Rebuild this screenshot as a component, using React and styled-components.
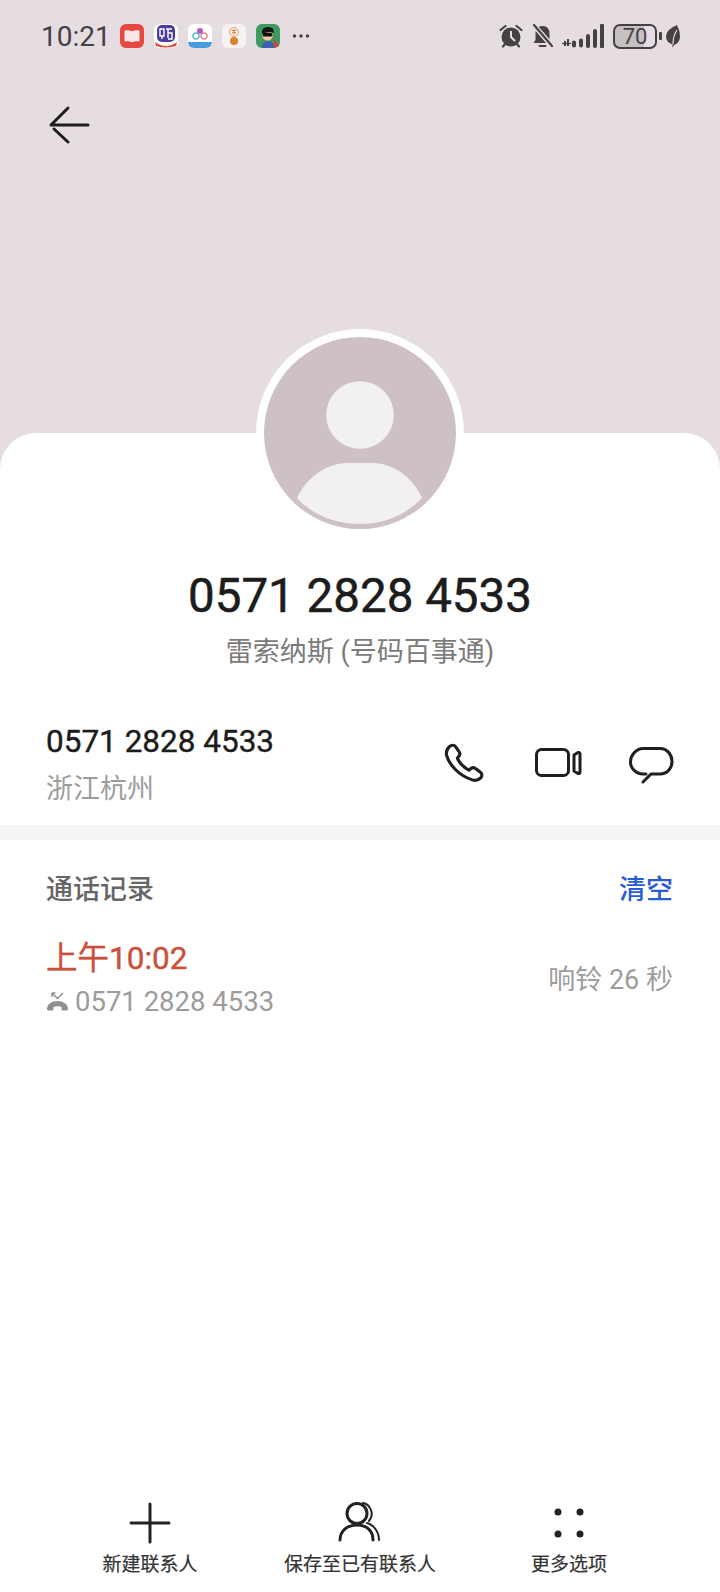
import styled, { createGlobalStyle } from "styled-components";

const Global = createGlobalStyle`
  html, body { margin: 0; padding: 0; background: #fff; }
  body { font-family: Roboto, "Noto Sans CJK SC", sans-serif; }
`;

const Page = styled.div`
  width: 720px;
  height: 1592px;
  display: flex;
  flex-direction: column;
  overflow: hidden;
  background: #e5dde2;
`;

const Header = styled.header`
  height: 433px;
  flex: none;
  display: flex;
  flex-direction: column;
`;

const StatusBar = styled.div`
  height: 72px;
  padding: 0 40px 0 41px;
  box-sizing: border-box;
  display: flex;
  align-items: center;
  color: #444044;
`;

const Time = styled.span`
  font-size: 28px;
  width: 79px;
  flex: none;
`;

const AppIcons = styled.div`
  display: flex;
  gap: 10px;
  align-items: center;
`;

const AppIcon = styled.svg`
  width: 24px;
  height: 24px;
  display: block;
`;

const Ellipsis = styled.svg`
  width: 18px;
  height: 6px;
  margin: 0 0 0 12px;
  display: block;
`;

const StatusRight = styled.div`
  margin-left: auto;
  display: flex;
  align-items: center;
  gap: 9px;
`;

const Battery = styled.div`
  display: flex;
  align-items: center;
  gap: 2px;
  margin-right: -5px;
`;

const BatteryBody = styled.div`
  width: 44px;
  height: 25px;
  box-sizing: border-box;
  border: 2px solid #444044;
  border-radius: 7px;
  background: linear-gradient(90deg, #c6c0c4 72%, transparent 72%);
  font-size: 22px;
  line-height: 21px;
  text-align: center;
`;

const BatteryNub = styled.div`
  width: 3px;
  height: 8px;
  background: #444044;
  border-radius: 1px;
`;

const BackButton = styled.button`
  border: 0;
  padding: 0;
  background: none;
  width: 42px;
  height: 40px;
  margin: 33px 0 0 48px;
  display: block;
`;

const Card = styled.main`
  flex: 1;
  min-height: 0;
  background: #fff;
  border-radius: 36px 36px 0 0;
  display: flex;
  flex-direction: column;
`;

const Avatar = styled.svg`
  width: 208px;
  height: 208px;
  margin: -104px auto 0;
  display: block;
  flex: none;
`;

const Title = styled.h1`
  margin: 32px 0 0;
  text-align: center;
  font-size: 47.500px;
  line-height: 54px;
  font-weight: 400;
  -webkit-text-stroke: 0.5px #1c1c1c;
  color: #1c1c1c;
`;

const Subtitle = styled.div`
  margin-top: 11px;
  text-align: center;
  font-size: 27px;
  line-height: 36px;
  color: #7b7b7b;
`;

const NumberRow = styled.section`
  margin-top: 52px;
  padding: 0 47px 0 46px;
  display: flex;
  justify-content: space-between;
  align-items: center;
`;

const Number = styled.div`
  font-size: 31.500px;
  line-height: 40px;
  font-weight: 400;
  -webkit-text-stroke: 0.4px #1c1c1c;
  color: #1c1c1c;
`;

const Place = styled.div`
  margin-top: 8px;
  font-size: 27px;
  line-height: 38px;
  color: #9c9c9c;
`;

const Actions = styled.div`
  display: flex;
  align-items: center;
  gap: 49px;
  margin-bottom: 5px;
`;

const ActionIcon = styled.svg`
  width: 44px;
  height: 44px;
  display: block;
  overflow: visible;
  fill: none;
  stroke: #1f1f1f;
  stroke-width: 3px;
  stroke-linecap: round;
  stroke-linejoin: round;
`;

const Divider = styled.div`
  height: 15px;
  margin-top: 17px;
  flex: none;
  background: #f5f5f5;
`;

const Log = styled.section`
  padding: 31px 47px 0 46px;
`;

const LogHead = styled.div`
  display: flex;
  justify-content: space-between;
  align-items: center;
  font-size: 27px;
  line-height: 38px;
  font-weight: 500;
`;

const LogTitle = styled.span`
  color: #666;
`;

const Clear = styled.span`
  color: #2a5cd6;
`;

const CallRow = styled.div`
  margin-top: 28px;
  display: flex;
  justify-content: space-between;
  align-items: center;
`;

const CallTime = styled.div`
  font-size: 31.500px;
  line-height: 44px;
  font-weight: 400;
  -webkit-text-stroke: 0.4px #c9503a;
  color: #c9503a;
`;

const CallNumber = styled.div`
  display: flex;
  align-items: center;
  gap: 6px;
  font-size: 27.500px;
  line-height: 42px;
  color: #9c9c9c;
`;

const MissedIcon = styled.svg`
  width: 23px;
  height: 20px;
  display: block;
`;

const Duration = styled.div`
  margin-bottom: 6px;
  font-size: 27px;
  color: #9c9c9c;
`;

const BottomBar = styled.nav`
  margin-top: auto;
  height: 91px;
  display: grid;
  grid-template-columns: 298px 124px 298px;
  justify-items: center;
`;

const BarItem = styled.div`
  display: flex;
  flex-direction: column;
  align-items: center;
  grid-column: ${(p) => p.$col};
  width: max-content;
  transform: translateX(${(p) => p.$shift}px);
`;

const BarIcon = styled.svg`
  width: 44px;
  height: 44px;
  display: block;
  fill: none;
  stroke: #222;
  stroke-width: 3px;
  stroke-linecap: round;
  stroke-linejoin: round;
`;

const BarLabel = styled.span`
  margin-top: 7px;
  font-size: 19px;
  line-height: 26px;
  -webkit-text-stroke: 0.2px #333;
  color: #333;
`;

const App = () => {
  return (
    <Page>
      <Global />
      <Header>
        <StatusBar>
          <Time>10:21</Time>
          <AppIcons>
            <AppIcon viewBox="0 0 24 24">
              <rect width="24" height="24" rx="6" fill="#e5483f" />
              <path d="M4.500 6.500q4-1 7.500.8q3.500-1.800 7.500-.8v11q-4-1-7.500.8q-3.500-1.800-7.500-.8z" fill="#fbe6e3" />
            </AppIcon>
            <AppIcon viewBox="0 0 24 24">
              <rect width="24" height="24" rx="6" fill="#fff" />
              <rect x="3" y="1" width="18" height="17" rx="5" fill="#4b3b9c" />
              <path d="M6 5h4v7H6zM8 12v3M12 5h6M14 5v9M14 9h4v6h-4" stroke="#fff" strokeWidth="1.400" fill="none" />
              <path d="M1 18q11 8 22 0l-1 4q-10 3-20 0z" fill="#d9503f" />
            </AppIcon>
            <AppIcon viewBox="0 0 24 24">
              <rect width="24" height="24" rx="6" fill="#fff" />
              <circle cx="12" cy="7" r="3" fill="#b75bb5" />
              <circle cx="8" cy="12" r="3" fill="none" stroke="#62b8dc" strokeWidth="1.500" />
              <circle cx="16" cy="12" r="3" fill="none" stroke="#e58a9a" strokeWidth="1.500" />
              <path d="M0 18h24v0a6 6 0 0 1-6 6H6a6 6 0 0 1-6-6z" fill="#4a9ce0" />
            </AppIcon>
            <AppIcon viewBox="0 0 24 24">
              <rect width="24" height="24" rx="6" fill="#f5f2f0" />
              <circle cx="12" cy="8" r="4.500" fill="none" stroke="#e08a4a" strokeWidth="0.800" />
              <path d="M9.500 6.500h5M12 5v6M10 8.500h4" stroke="#e08a4a" strokeWidth="1" fill="none" />
              <circle cx="12" cy="17" r="4" fill="#d98236" />
            </AppIcon>
            <AppIcon viewBox="0 0 24 24">
              <rect width="24" height="24" rx="6" fill="#3f9a5e" />
              <path d="M6 24q0-7 6-7t6 7z" fill="#3d5fb4" />
              <path d="M17 15l6 6v1l-5 2z" fill="#c9473f" />
              <circle cx="11.500" cy="11" r="5.500" fill="#f2c7a4" />
              <path d="M6 10q-1-7 6-7t5.500 6q-5-2-11.500 1z" fill="#161616" />
              <rect x="6.500" y="9" width="10" height="3.500" rx="1.500" fill="#111" />
            </AppIcon>
          </AppIcons>
          <Ellipsis viewBox="0 0 18 6">
            <circle cx="2.500" cy="3" r="1.700" fill="#444044" />
            <circle cx="9" cy="3" r="1.700" fill="#444044" />
            <circle cx="15.500" cy="3" r="1.700" fill="#444044" />
          </Ellipsis>
          <StatusRight>
            <svg width="24" height="24" viewBox="0 0 24 24">
              <circle cx="12" cy="13" r="9.500" fill="#444044" />
              <path d="M12 7v6l4 4" stroke="#e5dde2" strokeWidth="2" fill="none" />
              <path d="M1.500 6l5-4M22.500 6l-5-4M4 22.500l2-2.500M20 22.500l-2-2.500" stroke="#444044" strokeWidth="2.200" strokeLinecap="round" />
            </svg>
            <svg width="21" height="24" viewBox="0 0 21 24">
              <path d="M10.500 2q7 0 7 8v6l2 3H1.500l2-3v-6q0-8 7-8z" fill="#444044" />
              <path d="M7.500 22h6" stroke="#444044" strokeWidth="2" strokeLinecap="round" />
              <path d="M1 0l19 22" stroke="#e5dde2" strokeWidth="5" />
              <path d="M2 1l18 21" stroke="#444044" strokeWidth="2.200" strokeLinecap="round" />
            </svg>
            <svg width="42" height="24" viewBox="0 0 42 24">
              <path d="M3 17v5M6 15v7" stroke="#444044" strokeWidth="2" />
              <path d="M0 19.500h9" stroke="#444044" strokeWidth="1.200" />
              <path d="M12 18.500v3M19 16.500v5M26 12v10M33 7v15M40 1.500v21" stroke="#444044" strokeWidth="4" strokeLinecap="round" />
            </svg>
            <Battery>
              <BatteryBody>70</BatteryBody>
              <BatteryNub />
            </Battery>
            <svg width="14" height="22" viewBox="0 0 14 22">
              <path d="M11 0q3 6 3 11q0 7-6 9l-1 2-1-.5 1-2q-7-2-7-8q0-7 11-11.500z" fill="#444044" />
              <path d="M7 19q0-8 4-14" stroke="#e5dde2" strokeWidth="1.200" fill="none" />
            </svg>
          </StatusRight>
        </StatusBar>
        <BackButton aria-label="back">
          <svg width="42" height="40" viewBox="0 0 42 40" fill="none" stroke="#1c1c1c" strokeWidth="3" strokeLinecap="round" strokeLinejoin="round">
            <path d="M40 20H3M20 3L3 20M6 24l14 13" />
          </svg>
        </BackButton>
      </Header>
      <Card>
        <Avatar viewBox="0 0 208 208">
          <circle cx="104" cy="104" r="104" fill="#fff" />
          <circle cx="104" cy="104" r="96" fill="#cec1c6" />
          <circle cx="104" cy="86" r="33.800" fill="#f3f0f2" />
          <path d="M41 169C51 147 72 134 92 134h24c20 0 40 13 50 35C150 186 128 195 104 195S56 186 41 169z" fill="#f3f0f2" />
        </Avatar>
        <Title>0571 2828 4533</Title>
        <Subtitle>雷索纳斯 (号码百事通)</Subtitle>
        <NumberRow>
          <div>
            <Number>0571 2828 4533</Number>
            <Place>浙江杭州</Place>
          </div>
          <Actions>
            <ActionIcon viewBox="0 0 42 42">
              <path d="M6 5.500c2-2 5-2 6.500.5l3 4.500c1 1.500.6 3-.5 4.300l-1.300 1.500c1.500 4 6.500 9.500 11 11.500l2-1.500c1.300-1 3-1 4.300 0l4.500 3.300c2 1.500 2 4 .5 5.500-2 2-5 3-8 2C15 33 6 22.500 3.500 14 2.800 11 3.800 7.500 6 5.500z" />
            </ActionIcon>
            <ActionIcon viewBox="0 0 44 44">
              <rect x="0.500" y="8.500" width="32" height="26" rx="5" />
              <path d="M38 14l4-2.500q2-.5 2 1.500v18q0 2-2 1.500l-4-2.500z" />
            </ActionIcon>
            <ActionIcon viewBox="0 0 44 44">
              <path d="M17 33h-3C7 33 1.500 27.500 1.500 21S7 7.500 14 7.500h17c7 0 12 6 12 13S38 33 31 33h-9l-8 8" />
            </ActionIcon>
          </Actions>
        </NumberRow>
        <Divider />
        <Log>
          <LogHead>
            <LogTitle>通话记录</LogTitle>
            <Clear>清空</Clear>
          </LogHead>
          <CallRow>
            <div>
              <CallTime>上午10:02</CallTime>
              <CallNumber>
                <MissedIcon viewBox="0 0 23 20">
                  <path d="M1 17c0-5 5-8 10.500-8S22 12 22 17c0 1-1 1.500-2 1.500h-3c-1 0-1.500-.5-1.500-1.500v-2c-2.500-1-5.500-1-8 0v2c0 1-.5 1.500-1.500 1.500H3c-1 0-2-.5-2-1.500z" fill="#8f8f8f" />
                  <path d="M6 1l5.500 5.500M6 1v4M6 1h3.500M17 1l-5.500 5.500" stroke="#8f8f8f" strokeWidth="1.500" fill="none" />
                </MissedIcon>
                0571 2828 4533
              </CallNumber>
            </div>
            <Duration>响铃 26 秒</Duration>
          </CallRow>
        </Log>
        <BottomBar>
          <BarItem $col={1} $shift={1}>
            <BarIcon viewBox="0 0 44 44">
              <path d="M22 3v38M3 22h38" />
            </BarIcon>
            <BarLabel>新建联系人</BarLabel>
          </BarItem>
          <BarItem $col={2} $shift={0}>
            <BarIcon viewBox="0 0 44 44">
              <circle cx="19" cy="12.500" r="10" />
              <path d="M2 39c0-9 7-15 17-15s16 6 16 15" strokeWidth="3" />
              <path d="M25 2c7 1 12 11 6 18M29 22c7 2 12 9 12 17" strokeWidth="2" />
            </BarIcon>
            <BarLabel>保存至已有联系人</BarLabel>
          </BarItem>
          <BarItem $col={3} $shift={-2}>
            <BarIcon viewBox="0 0 44 44">
              <circle cx="11" cy="11" r="2" fill="#222" />
              <circle cx="33" cy="11" r="2" fill="#222" />
              <circle cx="11" cy="33" r="2" fill="#222" />
              <circle cx="33" cy="33" r="2" fill="#222" />
            </BarIcon>
            <BarLabel>更多选项</BarLabel>
          </BarItem>
        </BottomBar>
      </Card>
    </Page>
  );
};

export default App;
